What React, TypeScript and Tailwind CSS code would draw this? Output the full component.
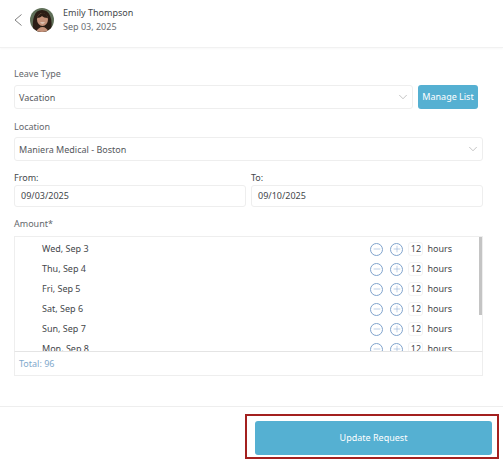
import { ChevronDown, Minus, Plus } from 'lucide-react';

const rows = ['Wed, Sep 3', 'Thu, Sep 4', 'Fri, Sep 5', 'Sat, Sep 6', 'Sun, Sep 7', 'Mon, Sep 8'];

function Avatar() {
  return (
    <svg width="24" height="24" viewBox="0 0 24 24" className="shrink-0 rounded-full">
      <rect width="24" height="24" fill="#5f6f58" />
      <path d="M3 24c-1-13 1-22 9-22s11 9 9 22z" fill="#2b1d15" />
      <ellipse cx="12.500" cy="11.500" rx="5.500" ry="6.500" fill="#c4927a" />
      <path d="M7 10c1-3 3-5 6-5s4 2 5 5c-3 0-5-1-6-2-1 1-3 2-5 2z" fill="#2b1d15" />
      <path d="M6 24c1-3 4-5 6.500-5s5 2 6.500 5z" fill="#c4927a" />
      <path d="M10 14.500c1.500 1.300 3.500 1.300 5 0z" fill="#f6f0ea" />
    </svg>
  );
}

function Field({ children, className = '' }: { children: React.ReactNode; className?: string }) {
  return (
    <div className={`flex items-center rounded-[3px] border border-[#eeeeee] bg-white pl-1 pr-[2px] ${className}`}>
      {children}
    </div>
  );
}

function RoundButton({ children }: { children: React.ReactNode }) {
  return (
    <span className="flex h-[13px] w-[13px] items-center justify-center rounded-full border border-[#7fa3cc] text-[#7fa3cc]">
      {children}
    </span>
  );
}

export default function App() {
  return (
    <div className="flex h-[459px] w-[503px] flex-col overflow-hidden bg-white font-['Noto_Sans',sans-serif] text-[9px] text-[#55585c]">
      <header className="flex h-[48px] shrink-0 items-center border-b border-[#f1f1f1] pb-[8px] pl-[14px] shadow-[0_1px_2px_rgba(0,0,0,0.03)]">
        <svg width="8" height="12" viewBox="0 0 8 12" fill="none" stroke="#808080" strokeWidth="1">
          <path d="M7.500 0.500 1 6l6.500 5.500" />
        </svg>
        <span className="ml-[8px]">
          <Avatar />
        </span>
        <div className="ml-[9px] pt-[1px] leading-[14px]">
          <div className="text-[#44474b]">Emily Thompson</div>
          <div className="text-[#6a6e73]">Sep 03, 2025</div>
        </div>
      </header>

      <main className="flex flex-col px-[14px] pr-[20px]">
        <label className="mt-[18px] h-[19px] leading-[16px] text-[#65686c]">Leave Type</label>
        <div className="flex gap-[5px]">
          <Field className="h-[24px] w-[399px] justify-between">
            <span className="pt-[1px]">Vacation</span>
            <ChevronDown size={14} strokeWidth={1} className="text-[#999999]" />
          </Field>
          <button className="h-[24px] w-[60px] rounded-[3px] bg-[#55b0d2] text-white">Manage List</button>
        </div>

        <label className="mt-[10px] h-[18px] leading-[16px] text-[#65686c]">Location</label>
        <Field className="h-[24px] justify-between">
          <span className="pt-[1px]">Maniera Medical - Boston</span>
          <ChevronDown size={14} strokeWidth={1} className="text-[#999999]" />
        </Field>

        <div className="mt-[10px] grid grid-cols-2 gap-[5px]">
          <div className="flex flex-col">
            <span className="h-[14px] leading-[14px] text-[#44474b]">From:</span>
            <Field className="h-[22px] pl-[6px] text-[#44474b]">09/03/2025</Field>
          </div>
          <div className="flex flex-col">
            <span className="h-[14px] leading-[14px] text-[#44474b]">To:</span>
            <Field className="h-[22px] pl-[6px] text-[#44474b]">09/10/2025</Field>
          </div>
        </div>

        <label className="mt-[9px] h-[20px] leading-[16px] text-[#65686c]">Amount*</label>
        <div className="relative h-[116px] overflow-hidden border border-[#eeeeee] border-b-[#e4e4e4]">
          <ul className="pt-[2px]">
            {rows.map(day => (
              <li key={day} className="flex h-[20px] items-center pl-[27px] pr-[30px] text-[#44474b]">
                <span className="flex-1">{day}</span>
                <div className="flex items-center">
                  <RoundButton>
                    <Minus size={10} strokeWidth={1.2} />
                  </RoundButton>
                  <span className="ml-[7px]">
                    <RoundButton>
                      <Plus size={10} strokeWidth={1.2} />
                    </RoundButton>
                  </span>
                  <span className="ml-[5px] flex h-[14px] w-[15px] items-center justify-center rounded-[3px] border border-[#f3f3f3]">12</span>
                  <span className="ml-[4px]">hours</span>
                </div>
              </li>
            ))}
          </ul>
          <div className="absolute right-0 top-0 h-[78px] w-[3px] bg-[#c4c4c4]" />
        </div>
        <div className="flex h-[24px] items-center border border-t-0 border-[#eeeeee] pl-[4px] text-[#7fa9cc]">Total: 96</div>
      </main>

      <footer className="mt-[30px] flex justify-end border-t border-[#eeeeee] pt-[7px] pr-[4px]">
        <div className="h-[45px] w-[254px] border-2 border-[#a3201f] px-[8px] pt-[5px]">
          <button className="h-[34px] w-[237px] rounded-[3px] bg-[#55b0d2] text-white">Update Request</button>
        </div>
      </footer>
    </div>
  );
}
